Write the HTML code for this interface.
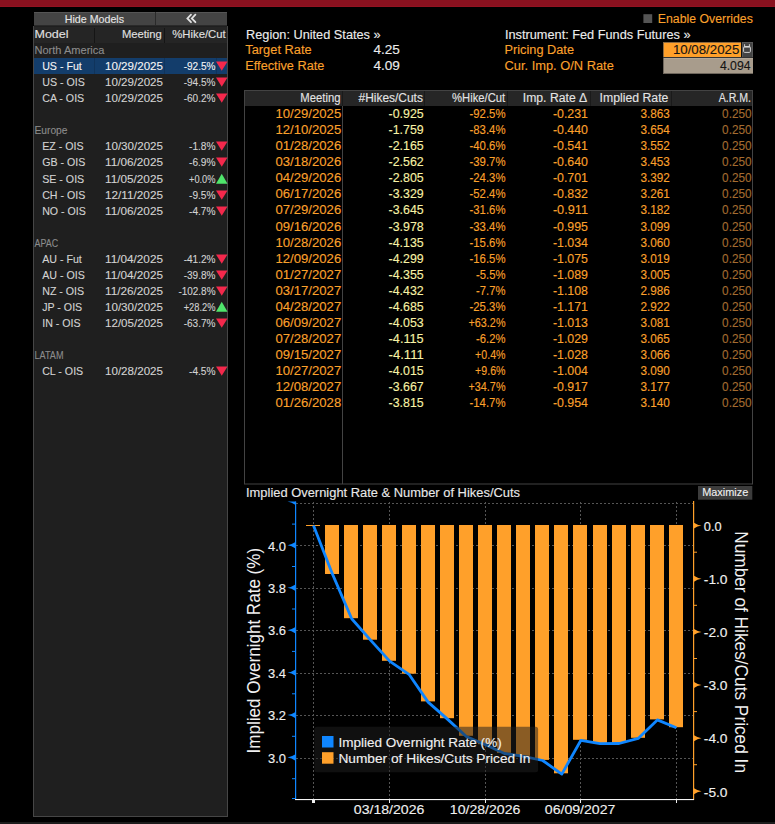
<!DOCTYPE html>
<html><head><meta charset="utf-8"><title>WIRP</title>
<style>html,body{margin:0;padding:0;background:#000;width:775px;height:824px;overflow:hidden}
svg{display:block;font-family:"Liberation Sans", sans-serif}</style></head>
<body><svg width="775" height="824" viewBox="0 0 775 824">
<rect x="0" y="0" width="775" height="824" fill="#000"/>
<rect x="0" y="0" width="775" height="7" fill="#89111f"/>
<rect x="0" y="6" width="775" height="1" fill="#931221"/>
<rect x="0" y="822" width="775" height="2" fill="#1c1c1c"/>
<rect x="33" y="26" width="195" height="791" fill="#464646"/>
<rect x="34" y="26" width="193" height="790" fill="#1f1f1f"/>
<rect x="34" y="12" width="193" height="14" fill="#2a2a2a"/>
<rect x="34" y="12" width="121" height="13" fill="#444444"/>
<rect x="34" y="12" width="121" height="1" fill="#555555"/>
<rect x="156" y="12" width="71" height="13" fill="#444444"/>
<rect x="156" y="12" width="71" height="1" fill="#555555"/>
<text x="64.8" y="22.5" font-size="11.5" fill="#e6e6e6" stroke="#e6e6e6" stroke-width="0.12" textLength="59.2" lengthAdjust="spacingAndGlyphs">Hide Models</text>
<path d="M191,14.6 L187.4,18.4 L191,22.2 M195.4,14.6 L191.8,18.4 L195.4,22.2" stroke="#e2e2e2" stroke-width="1.8" fill="none" stroke-linecap="round"/>
<rect x="34" y="27" width="193" height="16" fill="#252525"/>
<rect x="94" y="28" width="1" height="15" fill="#151515"/>
<rect x="164" y="28" width="1" height="15" fill="#151515"/>
<text x="34.5" y="38" font-size="11.5" fill="#e0e0e0" stroke="#e0e0e0" stroke-width="0.12" textLength="34" lengthAdjust="spacingAndGlyphs">Model</text>
<text x="161.8" y="38" font-size="11.5" fill="#e0e0e0" stroke="#e0e0e0" stroke-width="0.12" text-anchor="end" textLength="39.9" lengthAdjust="spacingAndGlyphs">Meeting</text>
<text x="225.7" y="38" font-size="11.5" fill="#e0e0e0" stroke="#e0e0e0" stroke-width="0.12" text-anchor="end" textLength="53.4" lengthAdjust="spacingAndGlyphs">%Hike/Cut</text>
<text x="34.5" y="54" font-size="11.5" fill="#8c8c8c" stroke="#8c8c8c" stroke-width="0.12" textLength="70.0" lengthAdjust="spacingAndGlyphs">North America</text>
<rect x="34" y="58" width="193" height="16" fill="#133d6b"/>
<rect x="94" y="58" width="1" height="16" fill="#10345c"/>
<rect x="164" y="58" width="1" height="16" fill="#10345c"/>
<rect x="216" y="58" width="1" height="16" fill="#10345c"/>
<text x="42.2" y="70" font-size="11.5" fill="#f4f4f4" stroke="#f4f4f4" stroke-width="0.12" textLength="39.6" lengthAdjust="spacingAndGlyphs">US - Fut</text>
<text x="163" y="70" font-size="11.5" fill="#f4f4f4" stroke="#f4f4f4" stroke-width="0.12" text-anchor="end" textLength="58" lengthAdjust="spacingAndGlyphs">10/29/2025</text>
<text x="215.5" y="70" font-size="11.5" fill="#f4f4f4" stroke="#f4f4f4" stroke-width="0.12" text-anchor="end" textLength="31.8" lengthAdjust="spacingAndGlyphs">-92.5%</text>
<path d="M216,61.4 L227.5,61.4 L221.75,70.8 Z" fill="#f4284c"/>
<text x="42.2" y="86" font-size="11.5" fill="#d2d2d2" stroke="#d2d2d2" stroke-width="0.12" textLength="42.6" lengthAdjust="spacingAndGlyphs">US - OIS</text>
<text x="163" y="86" font-size="11.5" fill="#d2d2d2" stroke="#d2d2d2" stroke-width="0.12" text-anchor="end" textLength="58" lengthAdjust="spacingAndGlyphs">10/29/2025</text>
<text x="215.5" y="86" font-size="11.5" fill="#d2d2d2" stroke="#d2d2d2" stroke-width="0.12" text-anchor="end" textLength="31.8" lengthAdjust="spacingAndGlyphs">-94.5%</text>
<path d="M216,77.4 L227.5,77.4 L221.75,86.8 Z" fill="#f4284c"/>
<text x="42.2" y="102" font-size="11.5" fill="#d2d2d2" stroke="#d2d2d2" stroke-width="0.12" textLength="42.0" lengthAdjust="spacingAndGlyphs">CA - OIS</text>
<text x="163" y="102" font-size="11.5" fill="#d2d2d2" stroke="#d2d2d2" stroke-width="0.12" text-anchor="end" textLength="58" lengthAdjust="spacingAndGlyphs">10/29/2025</text>
<text x="215.5" y="102" font-size="11.5" fill="#d2d2d2" stroke="#d2d2d2" stroke-width="0.12" text-anchor="end" textLength="31.8" lengthAdjust="spacingAndGlyphs">-60.2%</text>
<path d="M216,93.4 L227.5,93.4 L221.75,102.8 Z" fill="#f4284c"/>
<text x="34.5" y="134" font-size="11.5" fill="#8c8c8c" stroke="#8c8c8c" stroke-width="0.12" textLength="33.0" lengthAdjust="spacingAndGlyphs">Europe</text>
<text x="42.2" y="150" font-size="11.5" fill="#d2d2d2" stroke="#d2d2d2" stroke-width="0.12" textLength="41.4" lengthAdjust="spacingAndGlyphs">EZ - OIS</text>
<text x="163" y="150" font-size="11.5" fill="#d2d2d2" stroke="#d2d2d2" stroke-width="0.12" text-anchor="end" textLength="58" lengthAdjust="spacingAndGlyphs">10/30/2025</text>
<text x="215.5" y="150" font-size="11.5" fill="#d2d2d2" stroke="#d2d2d2" stroke-width="0.12" text-anchor="end" textLength="26.5" lengthAdjust="spacingAndGlyphs">-1.8%</text>
<path d="M216,141.4 L227.5,141.4 L221.75,150.8 Z" fill="#f4284c"/>
<text x="42.2" y="166" font-size="11.5" fill="#d2d2d2" stroke="#d2d2d2" stroke-width="0.12" textLength="43.1" lengthAdjust="spacingAndGlyphs">GB - OIS</text>
<text x="163" y="166" font-size="11.5" fill="#d2d2d2" stroke="#d2d2d2" stroke-width="0.12" text-anchor="end" textLength="58" lengthAdjust="spacingAndGlyphs">11/06/2025</text>
<text x="215.5" y="166" font-size="11.5" fill="#d2d2d2" stroke="#d2d2d2" stroke-width="0.12" text-anchor="end" textLength="26.5" lengthAdjust="spacingAndGlyphs">-6.9%</text>
<path d="M216,157.4 L227.5,157.4 L221.75,166.8 Z" fill="#f4284c"/>
<text x="42.2" y="183" font-size="11.5" fill="#d2d2d2" stroke="#d2d2d2" stroke-width="0.12" textLength="42.0" lengthAdjust="spacingAndGlyphs">SE - OIS</text>
<text x="163" y="183" font-size="11.5" fill="#d2d2d2" stroke="#d2d2d2" stroke-width="0.12" text-anchor="end" textLength="58" lengthAdjust="spacingAndGlyphs">11/05/2025</text>
<text x="215.5" y="183" font-size="11.5" fill="#d2d2d2" stroke="#d2d2d2" stroke-width="0.12" text-anchor="end" textLength="26.5" lengthAdjust="spacingAndGlyphs">+0.0%</text>
<path d="M216,183.8 L227.5,183.8 L221.75,173.8 Z" fill="#4fe56b"/>
<text x="42.2" y="199" font-size="11.5" fill="#d2d2d2" stroke="#d2d2d2" stroke-width="0.12" textLength="43.1" lengthAdjust="spacingAndGlyphs">CH - OIS</text>
<text x="163" y="199" font-size="11.5" fill="#d2d2d2" stroke="#d2d2d2" stroke-width="0.12" text-anchor="end" textLength="58" lengthAdjust="spacingAndGlyphs">12/11/2025</text>
<text x="215.5" y="199" font-size="11.5" fill="#d2d2d2" stroke="#d2d2d2" stroke-width="0.12" text-anchor="end" textLength="26.5" lengthAdjust="spacingAndGlyphs">-9.5%</text>
<path d="M216,190.4 L227.5,190.4 L221.75,199.8 Z" fill="#f4284c"/>
<text x="42.2" y="215" font-size="11.5" fill="#d2d2d2" stroke="#d2d2d2" stroke-width="0.12" textLength="43.7" lengthAdjust="spacingAndGlyphs">NO - OIS</text>
<text x="163" y="215" font-size="11.5" fill="#d2d2d2" stroke="#d2d2d2" stroke-width="0.12" text-anchor="end" textLength="58" lengthAdjust="spacingAndGlyphs">11/06/2025</text>
<text x="215.5" y="215" font-size="11.5" fill="#d2d2d2" stroke="#d2d2d2" stroke-width="0.12" text-anchor="end" textLength="26.5" lengthAdjust="spacingAndGlyphs">-4.7%</text>
<path d="M216,206.4 L227.5,206.4 L221.75,215.8 Z" fill="#f4284c"/>
<text x="34.5" y="247" font-size="11.5" fill="#8c8c8c" stroke="#8c8c8c" stroke-width="0.12" textLength="23.6" lengthAdjust="spacingAndGlyphs">APAC</text>
<text x="42.2" y="263" font-size="11.5" fill="#d2d2d2" stroke="#d2d2d2" stroke-width="0.12" textLength="39.6" lengthAdjust="spacingAndGlyphs">AU - Fut</text>
<text x="163" y="263" font-size="11.5" fill="#d2d2d2" stroke="#d2d2d2" stroke-width="0.12" text-anchor="end" textLength="58" lengthAdjust="spacingAndGlyphs">11/04/2025</text>
<text x="215.5" y="263" font-size="11.5" fill="#d2d2d2" stroke="#d2d2d2" stroke-width="0.12" text-anchor="end" textLength="31.8" lengthAdjust="spacingAndGlyphs">-41.2%</text>
<path d="M216,254.4 L227.5,254.4 L221.75,263.8 Z" fill="#f4284c"/>
<text x="42.2" y="279" font-size="11.5" fill="#d2d2d2" stroke="#d2d2d2" stroke-width="0.12" textLength="42.6" lengthAdjust="spacingAndGlyphs">AU - OIS</text>
<text x="163" y="279" font-size="11.5" fill="#d2d2d2" stroke="#d2d2d2" stroke-width="0.12" text-anchor="end" textLength="58" lengthAdjust="spacingAndGlyphs">11/04/2025</text>
<text x="215.5" y="279" font-size="11.5" fill="#d2d2d2" stroke="#d2d2d2" stroke-width="0.12" text-anchor="end" textLength="31.8" lengthAdjust="spacingAndGlyphs">-39.8%</text>
<path d="M216,270.4 L227.5,270.4 L221.75,279.8 Z" fill="#f4284c"/>
<text x="42.2" y="295" font-size="11.5" fill="#d2d2d2" stroke="#d2d2d2" stroke-width="0.12" textLength="42.0" lengthAdjust="spacingAndGlyphs">NZ - OIS</text>
<text x="163" y="295" font-size="11.5" fill="#d2d2d2" stroke="#d2d2d2" stroke-width="0.12" text-anchor="end" textLength="58" lengthAdjust="spacingAndGlyphs">11/26/2025</text>
<text x="215.5" y="295" font-size="11.5" fill="#d2d2d2" stroke="#d2d2d2" stroke-width="0.12" text-anchor="end" textLength="37.1" lengthAdjust="spacingAndGlyphs">-102.8%</text>
<path d="M216,286.4 L227.5,286.4 L221.75,295.8 Z" fill="#f4284c"/>
<text x="42.2" y="311" font-size="11.5" fill="#d2d2d2" stroke="#d2d2d2" stroke-width="0.12" textLength="40.0" lengthAdjust="spacingAndGlyphs">JP - OIS</text>
<text x="163" y="311" font-size="11.5" fill="#d2d2d2" stroke="#d2d2d2" stroke-width="0.12" text-anchor="end" textLength="58" lengthAdjust="spacingAndGlyphs">10/30/2025</text>
<text x="215.5" y="311" font-size="11.5" fill="#d2d2d2" stroke="#d2d2d2" stroke-width="0.12" text-anchor="end" textLength="31.8" lengthAdjust="spacingAndGlyphs">+28.2%</text>
<path d="M216,311.8 L227.5,311.8 L221.75,301.8 Z" fill="#4fe56b"/>
<text x="42.2" y="327" font-size="11.5" fill="#d2d2d2" stroke="#d2d2d2" stroke-width="0.12" textLength="38.4" lengthAdjust="spacingAndGlyphs">IN - OIS</text>
<text x="163" y="327" font-size="11.5" fill="#d2d2d2" stroke="#d2d2d2" stroke-width="0.12" text-anchor="end" textLength="58" lengthAdjust="spacingAndGlyphs">12/05/2025</text>
<text x="215.5" y="327" font-size="11.5" fill="#d2d2d2" stroke="#d2d2d2" stroke-width="0.12" text-anchor="end" textLength="31.8" lengthAdjust="spacingAndGlyphs">-63.7%</text>
<path d="M216,318.4 L227.5,318.4 L221.75,327.8 Z" fill="#f4284c"/>
<text x="34.5" y="359" font-size="11.5" fill="#8c8c8c" stroke="#8c8c8c" stroke-width="0.12" textLength="29.0" lengthAdjust="spacingAndGlyphs">LATAM</text>
<text x="42.2" y="375" font-size="11.5" fill="#d2d2d2" stroke="#d2d2d2" stroke-width="0.12" textLength="41.0" lengthAdjust="spacingAndGlyphs">CL - OIS</text>
<text x="163" y="375" font-size="11.5" fill="#d2d2d2" stroke="#d2d2d2" stroke-width="0.12" text-anchor="end" textLength="58" lengthAdjust="spacingAndGlyphs">10/28/2025</text>
<text x="215.5" y="375" font-size="11.5" fill="#d2d2d2" stroke="#d2d2d2" stroke-width="0.12" text-anchor="end" textLength="26.5" lengthAdjust="spacingAndGlyphs">-4.5%</text>
<path d="M216,366.4 L227.5,366.4 L221.75,375.8 Z" fill="#f4284c"/>
<text x="246" y="39" font-size="12.5" fill="#ececec" stroke="#ececec" stroke-width="0.12" textLength="134.6" lengthAdjust="spacingAndGlyphs">Region: United States »</text>
<text x="245.3" y="54" font-size="12.5" fill="#fba12c" stroke="#fba12c" stroke-width="0.12" textLength="66.3" lengthAdjust="spacingAndGlyphs">Target Rate</text>
<text x="245.3" y="69.9" font-size="12.5" fill="#fba12c" stroke="#fba12c" stroke-width="0.12" textLength="79.1" lengthAdjust="spacingAndGlyphs">Effective Rate</text>
<text x="399.9" y="54" font-size="12.5" fill="#ececec" stroke="#ececec" stroke-width="0.12" text-anchor="end" textLength="26.5" lengthAdjust="spacingAndGlyphs">4.25</text>
<text x="399.9" y="69.9" font-size="12.5" fill="#ececec" stroke="#ececec" stroke-width="0.12" text-anchor="end" textLength="26.5" lengthAdjust="spacingAndGlyphs">4.09</text>
<rect x="643.4" y="14.2" width="8.8" height="8.8" fill="#555555"/>
<text x="657.8" y="22.8" font-size="12.5" fill="#fba12c" stroke="#fba12c" stroke-width="0.12" textLength="95" lengthAdjust="spacingAndGlyphs">Enable Overrides</text>
<text x="505" y="39" font-size="12.5" fill="#ececec" stroke="#ececec" stroke-width="0.12" textLength="185.5" lengthAdjust="spacingAndGlyphs">Instrument: Fed Funds Futures »</text>
<text x="504.5" y="54" font-size="12.5" fill="#fba12c" stroke="#fba12c" stroke-width="0.12" textLength="69.5" lengthAdjust="spacingAndGlyphs">Pricing Date</text>
<text x="504.5" y="69.9" font-size="12.5" fill="#fba12c" stroke="#fba12c" stroke-width="0.12" textLength="109.3" lengthAdjust="spacingAndGlyphs">Cur. Imp. O/N Rate</text>
<rect x="663" y="42" width="78" height="15" fill="#8c6a40"/>
<rect x="664" y="43" width="77" height="14" fill="#ffa02a"/>
<rect x="741" y="42" width="1" height="15" fill="#111111"/>
<rect x="742" y="42" width="11" height="16" fill="#575757"/>
<rect x="743" y="43" width="9" height="14" fill="#444444"/>
<text x="739.3" y="54" font-size="12.5" fill="#141414" stroke="#141414" stroke-width="0.12" text-anchor="end" textLength="66.4" lengthAdjust="spacingAndGlyphs">10/08/2025</text>
<rect x="743.6" y="46.6" width="6.8" height="5.8" rx="1" fill="none" stroke="#d0d0d0" stroke-width="1"/>
<rect x="744" y="46.3" width="6" height="1.2" fill="#e0e0e0"/>
<path d="M744.6,44.2 L744.6,46.5 M749.4,44.2 L749.4,46.5" stroke="#cfcfcf" stroke-width="1"/>
<rect x="663" y="57" width="90" height="17" fill="#333333"/>
<rect x="663" y="58" width="90" height="16" fill="#6e665c"/>
<rect x="664" y="58" width="89" height="15" fill="#a89c8c"/>
<rect x="664" y="58" width="89" height="1" fill="#b4a898"/>
<text x="750.5" y="69.6" font-size="12.5" fill="#141414" stroke="#141414" stroke-width="0.12" text-anchor="end" textLength="30.6" lengthAdjust="spacingAndGlyphs">4.094</text>
<rect x="244.5" y="90.5" width="508" height="393.5" fill="#000" stroke="#434343" stroke-width="1"/>
<rect x="245" y="91" width="507" height="15" fill="#262626"/>
<rect x="342" y="91" width="1" height="15" fill="#1a1a1a"/>
<rect x="424" y="91" width="1" height="15" fill="#1a1a1a"/>
<rect x="507" y="91" width="1" height="15" fill="#1a1a1a"/>
<rect x="590" y="91" width="1" height="15" fill="#1a1a1a"/>
<rect x="671" y="91" width="1" height="15" fill="#1a1a1a"/>
<rect x="342" y="106" width="1" height="378" fill="#434343"/>
<text x="340.5" y="101.8" font-size="12" fill="#e4e4e4" stroke="#e4e4e4" stroke-width="0.12" text-anchor="end" textLength="40.2" lengthAdjust="spacingAndGlyphs">Meeting</text>
<text x="422.9" y="101.8" font-size="12" fill="#e4e4e4" stroke="#e4e4e4" stroke-width="0.12" text-anchor="end" textLength="64.4" lengthAdjust="spacingAndGlyphs">#Hikes/Cuts</text>
<text x="505.2" y="101.8" font-size="12" fill="#e4e4e4" stroke="#e4e4e4" stroke-width="0.12" text-anchor="end" textLength="53.2" lengthAdjust="spacingAndGlyphs">%Hike/Cut</text>
<text x="587.2" y="101.8" font-size="12" fill="#e4e4e4" stroke="#e4e4e4" stroke-width="0.12" text-anchor="end" textLength="64.4" lengthAdjust="spacingAndGlyphs">Imp. Rate Δ</text>
<text x="668.4" y="101.8" font-size="12" fill="#e4e4e4" stroke="#e4e4e4" stroke-width="0.12" text-anchor="end" textLength="68.8" lengthAdjust="spacingAndGlyphs">Implied Rate</text>
<text x="751" y="101.8" font-size="12" fill="#e4e4e4" stroke="#e4e4e4" stroke-width="0.12" text-anchor="end" textLength="32.3" lengthAdjust="spacingAndGlyphs">A.R.M.</text>
<text x="341.2" y="118" font-size="13" fill="#fba12c" stroke="#fba12c" stroke-width="0.12" text-anchor="end" textLength="65.7" lengthAdjust="spacingAndGlyphs">10/29/2025</text>
<text x="423.7" y="118" font-size="13" fill="#f8f2a6" stroke="#f8f2a6" stroke-width="0.12" text-anchor="end" textLength="35.1" lengthAdjust="spacingAndGlyphs">-0.925</text>
<text x="505.5" y="118" font-size="13" fill="#fba12c" stroke="#fba12c" stroke-width="0.12" text-anchor="end" textLength="36.0" lengthAdjust="spacingAndGlyphs">-92.5%</text>
<text x="588" y="118" font-size="13" fill="#fba12c" stroke="#fba12c" stroke-width="0.12" text-anchor="end" textLength="35.1" lengthAdjust="spacingAndGlyphs">-0.231</text>
<text x="669.9" y="118" font-size="13" fill="#fba12c" stroke="#fba12c" stroke-width="0.12" text-anchor="end" textLength="29.5" lengthAdjust="spacingAndGlyphs">3.863</text>
<text x="751.6" y="118" font-size="13" fill="#a46c30" stroke="#a46c30" stroke-width="0.12" text-anchor="end" textLength="29.5" lengthAdjust="spacingAndGlyphs">0.250</text>
<text x="341.2" y="134" font-size="13" fill="#fba12c" stroke="#fba12c" stroke-width="0.12" text-anchor="end" textLength="65.7" lengthAdjust="spacingAndGlyphs">12/10/2025</text>
<text x="423.7" y="134" font-size="13" fill="#f8f2a6" stroke="#f8f2a6" stroke-width="0.12" text-anchor="end" textLength="35.1" lengthAdjust="spacingAndGlyphs">-1.759</text>
<text x="505.5" y="134" font-size="13" fill="#fba12c" stroke="#fba12c" stroke-width="0.12" text-anchor="end" textLength="36.0" lengthAdjust="spacingAndGlyphs">-83.4%</text>
<text x="588" y="134" font-size="13" fill="#fba12c" stroke="#fba12c" stroke-width="0.12" text-anchor="end" textLength="35.1" lengthAdjust="spacingAndGlyphs">-0.440</text>
<text x="669.9" y="134" font-size="13" fill="#fba12c" stroke="#fba12c" stroke-width="0.12" text-anchor="end" textLength="29.5" lengthAdjust="spacingAndGlyphs">3.654</text>
<text x="751.6" y="134" font-size="13" fill="#a46c30" stroke="#a46c30" stroke-width="0.12" text-anchor="end" textLength="29.5" lengthAdjust="spacingAndGlyphs">0.250</text>
<text x="341.2" y="150" font-size="13" fill="#fba12c" stroke="#fba12c" stroke-width="0.12" text-anchor="end" textLength="65.7" lengthAdjust="spacingAndGlyphs">01/28/2026</text>
<text x="423.7" y="150" font-size="13" fill="#f8f2a6" stroke="#f8f2a6" stroke-width="0.12" text-anchor="end" textLength="35.1" lengthAdjust="spacingAndGlyphs">-2.165</text>
<text x="505.5" y="150" font-size="13" fill="#fba12c" stroke="#fba12c" stroke-width="0.12" text-anchor="end" textLength="36.0" lengthAdjust="spacingAndGlyphs">-40.6%</text>
<text x="588" y="150" font-size="13" fill="#fba12c" stroke="#fba12c" stroke-width="0.12" text-anchor="end" textLength="35.1" lengthAdjust="spacingAndGlyphs">-0.541</text>
<text x="669.9" y="150" font-size="13" fill="#fba12c" stroke="#fba12c" stroke-width="0.12" text-anchor="end" textLength="29.5" lengthAdjust="spacingAndGlyphs">3.552</text>
<text x="751.6" y="150" font-size="13" fill="#a46c30" stroke="#a46c30" stroke-width="0.12" text-anchor="end" textLength="29.5" lengthAdjust="spacingAndGlyphs">0.250</text>
<text x="341.2" y="166" font-size="13" fill="#fba12c" stroke="#fba12c" stroke-width="0.12" text-anchor="end" textLength="65.7" lengthAdjust="spacingAndGlyphs">03/18/2026</text>
<text x="423.7" y="166" font-size="13" fill="#f8f2a6" stroke="#f8f2a6" stroke-width="0.12" text-anchor="end" textLength="35.1" lengthAdjust="spacingAndGlyphs">-2.562</text>
<text x="505.5" y="166" font-size="13" fill="#fba12c" stroke="#fba12c" stroke-width="0.12" text-anchor="end" textLength="36.0" lengthAdjust="spacingAndGlyphs">-39.7%</text>
<text x="588" y="166" font-size="13" fill="#fba12c" stroke="#fba12c" stroke-width="0.12" text-anchor="end" textLength="35.1" lengthAdjust="spacingAndGlyphs">-0.640</text>
<text x="669.9" y="166" font-size="13" fill="#fba12c" stroke="#fba12c" stroke-width="0.12" text-anchor="end" textLength="29.5" lengthAdjust="spacingAndGlyphs">3.453</text>
<text x="751.6" y="166" font-size="13" fill="#a46c30" stroke="#a46c30" stroke-width="0.12" text-anchor="end" textLength="29.5" lengthAdjust="spacingAndGlyphs">0.250</text>
<text x="341.2" y="182" font-size="13" fill="#fba12c" stroke="#fba12c" stroke-width="0.12" text-anchor="end" textLength="65.7" lengthAdjust="spacingAndGlyphs">04/29/2026</text>
<text x="423.7" y="182" font-size="13" fill="#f8f2a6" stroke="#f8f2a6" stroke-width="0.12" text-anchor="end" textLength="35.1" lengthAdjust="spacingAndGlyphs">-2.805</text>
<text x="505.5" y="182" font-size="13" fill="#fba12c" stroke="#fba12c" stroke-width="0.12" text-anchor="end" textLength="36.0" lengthAdjust="spacingAndGlyphs">-24.3%</text>
<text x="588" y="182" font-size="13" fill="#fba12c" stroke="#fba12c" stroke-width="0.12" text-anchor="end" textLength="35.1" lengthAdjust="spacingAndGlyphs">-0.701</text>
<text x="669.9" y="182" font-size="13" fill="#fba12c" stroke="#fba12c" stroke-width="0.12" text-anchor="end" textLength="29.5" lengthAdjust="spacingAndGlyphs">3.392</text>
<text x="751.6" y="182" font-size="13" fill="#a46c30" stroke="#a46c30" stroke-width="0.12" text-anchor="end" textLength="29.5" lengthAdjust="spacingAndGlyphs">0.250</text>
<text x="341.2" y="198" font-size="13" fill="#fba12c" stroke="#fba12c" stroke-width="0.12" text-anchor="end" textLength="65.7" lengthAdjust="spacingAndGlyphs">06/17/2026</text>
<text x="423.7" y="198" font-size="13" fill="#f8f2a6" stroke="#f8f2a6" stroke-width="0.12" text-anchor="end" textLength="35.1" lengthAdjust="spacingAndGlyphs">-3.329</text>
<text x="505.5" y="198" font-size="13" fill="#fba12c" stroke="#fba12c" stroke-width="0.12" text-anchor="end" textLength="36.0" lengthAdjust="spacingAndGlyphs">-52.4%</text>
<text x="588" y="198" font-size="13" fill="#fba12c" stroke="#fba12c" stroke-width="0.12" text-anchor="end" textLength="35.1" lengthAdjust="spacingAndGlyphs">-0.832</text>
<text x="669.9" y="198" font-size="13" fill="#fba12c" stroke="#fba12c" stroke-width="0.12" text-anchor="end" textLength="29.5" lengthAdjust="spacingAndGlyphs">3.261</text>
<text x="751.6" y="198" font-size="13" fill="#a46c30" stroke="#a46c30" stroke-width="0.12" text-anchor="end" textLength="29.5" lengthAdjust="spacingAndGlyphs">0.250</text>
<text x="341.2" y="214" font-size="13" fill="#fba12c" stroke="#fba12c" stroke-width="0.12" text-anchor="end" textLength="65.7" lengthAdjust="spacingAndGlyphs">07/29/2026</text>
<text x="423.7" y="214" font-size="13" fill="#f8f2a6" stroke="#f8f2a6" stroke-width="0.12" text-anchor="end" textLength="35.1" lengthAdjust="spacingAndGlyphs">-3.645</text>
<text x="505.5" y="214" font-size="13" fill="#fba12c" stroke="#fba12c" stroke-width="0.12" text-anchor="end" textLength="36.0" lengthAdjust="spacingAndGlyphs">-31.6%</text>
<text x="588" y="214" font-size="13" fill="#fba12c" stroke="#fba12c" stroke-width="0.12" text-anchor="end" textLength="35.1" lengthAdjust="spacingAndGlyphs">-0.911</text>
<text x="669.9" y="214" font-size="13" fill="#fba12c" stroke="#fba12c" stroke-width="0.12" text-anchor="end" textLength="29.5" lengthAdjust="spacingAndGlyphs">3.182</text>
<text x="751.6" y="214" font-size="13" fill="#a46c30" stroke="#a46c30" stroke-width="0.12" text-anchor="end" textLength="29.5" lengthAdjust="spacingAndGlyphs">0.250</text>
<text x="341.2" y="231" font-size="13" fill="#fba12c" stroke="#fba12c" stroke-width="0.12" text-anchor="end" textLength="65.7" lengthAdjust="spacingAndGlyphs">09/16/2026</text>
<text x="423.7" y="231" font-size="13" fill="#f8f2a6" stroke="#f8f2a6" stroke-width="0.12" text-anchor="end" textLength="35.1" lengthAdjust="spacingAndGlyphs">-3.978</text>
<text x="505.5" y="231" font-size="13" fill="#fba12c" stroke="#fba12c" stroke-width="0.12" text-anchor="end" textLength="36.0" lengthAdjust="spacingAndGlyphs">-33.4%</text>
<text x="588" y="231" font-size="13" fill="#fba12c" stroke="#fba12c" stroke-width="0.12" text-anchor="end" textLength="35.1" lengthAdjust="spacingAndGlyphs">-0.995</text>
<text x="669.9" y="231" font-size="13" fill="#fba12c" stroke="#fba12c" stroke-width="0.12" text-anchor="end" textLength="29.5" lengthAdjust="spacingAndGlyphs">3.099</text>
<text x="751.6" y="231" font-size="13" fill="#a46c30" stroke="#a46c30" stroke-width="0.12" text-anchor="end" textLength="29.5" lengthAdjust="spacingAndGlyphs">0.250</text>
<text x="341.2" y="247" font-size="13" fill="#fba12c" stroke="#fba12c" stroke-width="0.12" text-anchor="end" textLength="65.7" lengthAdjust="spacingAndGlyphs">10/28/2026</text>
<text x="423.7" y="247" font-size="13" fill="#f8f2a6" stroke="#f8f2a6" stroke-width="0.12" text-anchor="end" textLength="35.1" lengthAdjust="spacingAndGlyphs">-4.135</text>
<text x="505.5" y="247" font-size="13" fill="#fba12c" stroke="#fba12c" stroke-width="0.12" text-anchor="end" textLength="36.0" lengthAdjust="spacingAndGlyphs">-15.6%</text>
<text x="588" y="247" font-size="13" fill="#fba12c" stroke="#fba12c" stroke-width="0.12" text-anchor="end" textLength="35.1" lengthAdjust="spacingAndGlyphs">-1.034</text>
<text x="669.9" y="247" font-size="13" fill="#fba12c" stroke="#fba12c" stroke-width="0.12" text-anchor="end" textLength="29.5" lengthAdjust="spacingAndGlyphs">3.060</text>
<text x="751.6" y="247" font-size="13" fill="#a46c30" stroke="#a46c30" stroke-width="0.12" text-anchor="end" textLength="29.5" lengthAdjust="spacingAndGlyphs">0.250</text>
<text x="341.2" y="263" font-size="13" fill="#fba12c" stroke="#fba12c" stroke-width="0.12" text-anchor="end" textLength="65.7" lengthAdjust="spacingAndGlyphs">12/09/2026</text>
<text x="423.7" y="263" font-size="13" fill="#f8f2a6" stroke="#f8f2a6" stroke-width="0.12" text-anchor="end" textLength="35.1" lengthAdjust="spacingAndGlyphs">-4.299</text>
<text x="505.5" y="263" font-size="13" fill="#fba12c" stroke="#fba12c" stroke-width="0.12" text-anchor="end" textLength="36.0" lengthAdjust="spacingAndGlyphs">-16.5%</text>
<text x="588" y="263" font-size="13" fill="#fba12c" stroke="#fba12c" stroke-width="0.12" text-anchor="end" textLength="35.1" lengthAdjust="spacingAndGlyphs">-1.075</text>
<text x="669.9" y="263" font-size="13" fill="#fba12c" stroke="#fba12c" stroke-width="0.12" text-anchor="end" textLength="29.5" lengthAdjust="spacingAndGlyphs">3.019</text>
<text x="751.6" y="263" font-size="13" fill="#a46c30" stroke="#a46c30" stroke-width="0.12" text-anchor="end" textLength="29.5" lengthAdjust="spacingAndGlyphs">0.250</text>
<text x="341.2" y="279" font-size="13" fill="#fba12c" stroke="#fba12c" stroke-width="0.12" text-anchor="end" textLength="65.7" lengthAdjust="spacingAndGlyphs">01/27/2027</text>
<text x="423.7" y="279" font-size="13" fill="#f8f2a6" stroke="#f8f2a6" stroke-width="0.12" text-anchor="end" textLength="35.1" lengthAdjust="spacingAndGlyphs">-4.355</text>
<text x="505.5" y="279" font-size="13" fill="#fba12c" stroke="#fba12c" stroke-width="0.12" text-anchor="end" textLength="29.4" lengthAdjust="spacingAndGlyphs">-5.5%</text>
<text x="588" y="279" font-size="13" fill="#fba12c" stroke="#fba12c" stroke-width="0.12" text-anchor="end" textLength="35.1" lengthAdjust="spacingAndGlyphs">-1.089</text>
<text x="669.9" y="279" font-size="13" fill="#fba12c" stroke="#fba12c" stroke-width="0.12" text-anchor="end" textLength="29.5" lengthAdjust="spacingAndGlyphs">3.005</text>
<text x="751.6" y="279" font-size="13" fill="#a46c30" stroke="#a46c30" stroke-width="0.12" text-anchor="end" textLength="29.5" lengthAdjust="spacingAndGlyphs">0.250</text>
<text x="341.2" y="295" font-size="13" fill="#fba12c" stroke="#fba12c" stroke-width="0.12" text-anchor="end" textLength="65.7" lengthAdjust="spacingAndGlyphs">03/17/2027</text>
<text x="423.7" y="295" font-size="13" fill="#f8f2a6" stroke="#f8f2a6" stroke-width="0.12" text-anchor="end" textLength="35.1" lengthAdjust="spacingAndGlyphs">-4.432</text>
<text x="505.5" y="295" font-size="13" fill="#fba12c" stroke="#fba12c" stroke-width="0.12" text-anchor="end" textLength="29.4" lengthAdjust="spacingAndGlyphs">-7.7%</text>
<text x="588" y="295" font-size="13" fill="#fba12c" stroke="#fba12c" stroke-width="0.12" text-anchor="end" textLength="35.1" lengthAdjust="spacingAndGlyphs">-1.108</text>
<text x="669.9" y="295" font-size="13" fill="#fba12c" stroke="#fba12c" stroke-width="0.12" text-anchor="end" textLength="29.5" lengthAdjust="spacingAndGlyphs">2.986</text>
<text x="751.6" y="295" font-size="13" fill="#a46c30" stroke="#a46c30" stroke-width="0.12" text-anchor="end" textLength="29.5" lengthAdjust="spacingAndGlyphs">0.250</text>
<text x="341.2" y="311" font-size="13" fill="#fba12c" stroke="#fba12c" stroke-width="0.12" text-anchor="end" textLength="65.7" lengthAdjust="spacingAndGlyphs">04/28/2027</text>
<text x="423.7" y="311" font-size="13" fill="#f8f2a6" stroke="#f8f2a6" stroke-width="0.12" text-anchor="end" textLength="35.1" lengthAdjust="spacingAndGlyphs">-4.685</text>
<text x="505.5" y="311" font-size="13" fill="#fba12c" stroke="#fba12c" stroke-width="0.12" text-anchor="end" textLength="36.0" lengthAdjust="spacingAndGlyphs">-25.3%</text>
<text x="588" y="311" font-size="13" fill="#fba12c" stroke="#fba12c" stroke-width="0.12" text-anchor="end" textLength="35.1" lengthAdjust="spacingAndGlyphs">-1.171</text>
<text x="669.9" y="311" font-size="13" fill="#fba12c" stroke="#fba12c" stroke-width="0.12" text-anchor="end" textLength="29.5" lengthAdjust="spacingAndGlyphs">2.922</text>
<text x="751.6" y="311" font-size="13" fill="#a46c30" stroke="#a46c30" stroke-width="0.12" text-anchor="end" textLength="29.5" lengthAdjust="spacingAndGlyphs">0.250</text>
<text x="341.2" y="327" font-size="13" fill="#fba12c" stroke="#fba12c" stroke-width="0.12" text-anchor="end" textLength="65.7" lengthAdjust="spacingAndGlyphs">06/09/2027</text>
<text x="423.7" y="327" font-size="13" fill="#f8f2a6" stroke="#f8f2a6" stroke-width="0.12" text-anchor="end" textLength="35.1" lengthAdjust="spacingAndGlyphs">-4.053</text>
<text x="505.5" y="327" font-size="13" fill="#fba12c" stroke="#fba12c" stroke-width="0.12" text-anchor="end" textLength="37.0" lengthAdjust="spacingAndGlyphs">+63.2%</text>
<text x="588" y="327" font-size="13" fill="#fba12c" stroke="#fba12c" stroke-width="0.12" text-anchor="end" textLength="35.1" lengthAdjust="spacingAndGlyphs">-1.013</text>
<text x="669.9" y="327" font-size="13" fill="#fba12c" stroke="#fba12c" stroke-width="0.12" text-anchor="end" textLength="29.5" lengthAdjust="spacingAndGlyphs">3.081</text>
<text x="751.6" y="327" font-size="13" fill="#a46c30" stroke="#a46c30" stroke-width="0.12" text-anchor="end" textLength="29.5" lengthAdjust="spacingAndGlyphs">0.250</text>
<text x="341.2" y="343" font-size="13" fill="#fba12c" stroke="#fba12c" stroke-width="0.12" text-anchor="end" textLength="65.7" lengthAdjust="spacingAndGlyphs">07/28/2027</text>
<text x="423.7" y="343" font-size="13" fill="#f8f2a6" stroke="#f8f2a6" stroke-width="0.12" text-anchor="end" textLength="35.1" lengthAdjust="spacingAndGlyphs">-4.115</text>
<text x="505.5" y="343" font-size="13" fill="#fba12c" stroke="#fba12c" stroke-width="0.12" text-anchor="end" textLength="29.4" lengthAdjust="spacingAndGlyphs">-6.2%</text>
<text x="588" y="343" font-size="13" fill="#fba12c" stroke="#fba12c" stroke-width="0.12" text-anchor="end" textLength="35.1" lengthAdjust="spacingAndGlyphs">-1.029</text>
<text x="669.9" y="343" font-size="13" fill="#fba12c" stroke="#fba12c" stroke-width="0.12" text-anchor="end" textLength="29.5" lengthAdjust="spacingAndGlyphs">3.065</text>
<text x="751.6" y="343" font-size="13" fill="#a46c30" stroke="#a46c30" stroke-width="0.12" text-anchor="end" textLength="29.5" lengthAdjust="spacingAndGlyphs">0.250</text>
<text x="341.2" y="359" font-size="13" fill="#fba12c" stroke="#fba12c" stroke-width="0.12" text-anchor="end" textLength="65.7" lengthAdjust="spacingAndGlyphs">09/15/2027</text>
<text x="423.7" y="359" font-size="13" fill="#f8f2a6" stroke="#f8f2a6" stroke-width="0.12" text-anchor="end" textLength="35.1" lengthAdjust="spacingAndGlyphs">-4.111</text>
<text x="505.5" y="359" font-size="13" fill="#fba12c" stroke="#fba12c" stroke-width="0.12" text-anchor="end" textLength="30.4" lengthAdjust="spacingAndGlyphs">+0.4%</text>
<text x="588" y="359" font-size="13" fill="#fba12c" stroke="#fba12c" stroke-width="0.12" text-anchor="end" textLength="35.1" lengthAdjust="spacingAndGlyphs">-1.028</text>
<text x="669.9" y="359" font-size="13" fill="#fba12c" stroke="#fba12c" stroke-width="0.12" text-anchor="end" textLength="29.5" lengthAdjust="spacingAndGlyphs">3.066</text>
<text x="751.6" y="359" font-size="13" fill="#a46c30" stroke="#a46c30" stroke-width="0.12" text-anchor="end" textLength="29.5" lengthAdjust="spacingAndGlyphs">0.250</text>
<text x="341.2" y="375" font-size="13" fill="#fba12c" stroke="#fba12c" stroke-width="0.12" text-anchor="end" textLength="65.7" lengthAdjust="spacingAndGlyphs">10/27/2027</text>
<text x="423.7" y="375" font-size="13" fill="#f8f2a6" stroke="#f8f2a6" stroke-width="0.12" text-anchor="end" textLength="35.1" lengthAdjust="spacingAndGlyphs">-4.015</text>
<text x="505.5" y="375" font-size="13" fill="#fba12c" stroke="#fba12c" stroke-width="0.12" text-anchor="end" textLength="30.4" lengthAdjust="spacingAndGlyphs">+9.6%</text>
<text x="588" y="375" font-size="13" fill="#fba12c" stroke="#fba12c" stroke-width="0.12" text-anchor="end" textLength="35.1" lengthAdjust="spacingAndGlyphs">-1.004</text>
<text x="669.9" y="375" font-size="13" fill="#fba12c" stroke="#fba12c" stroke-width="0.12" text-anchor="end" textLength="29.5" lengthAdjust="spacingAndGlyphs">3.090</text>
<text x="751.6" y="375" font-size="13" fill="#a46c30" stroke="#a46c30" stroke-width="0.12" text-anchor="end" textLength="29.5" lengthAdjust="spacingAndGlyphs">0.250</text>
<text x="341.2" y="391" font-size="13" fill="#fba12c" stroke="#fba12c" stroke-width="0.12" text-anchor="end" textLength="65.7" lengthAdjust="spacingAndGlyphs">12/08/2027</text>
<text x="423.7" y="391" font-size="13" fill="#f8f2a6" stroke="#f8f2a6" stroke-width="0.12" text-anchor="end" textLength="35.1" lengthAdjust="spacingAndGlyphs">-3.667</text>
<text x="505.5" y="391" font-size="13" fill="#fba12c" stroke="#fba12c" stroke-width="0.12" text-anchor="end" textLength="37.0" lengthAdjust="spacingAndGlyphs">+34.7%</text>
<text x="588" y="391" font-size="13" fill="#fba12c" stroke="#fba12c" stroke-width="0.12" text-anchor="end" textLength="35.1" lengthAdjust="spacingAndGlyphs">-0.917</text>
<text x="669.9" y="391" font-size="13" fill="#fba12c" stroke="#fba12c" stroke-width="0.12" text-anchor="end" textLength="29.5" lengthAdjust="spacingAndGlyphs">3.177</text>
<text x="751.6" y="391" font-size="13" fill="#a46c30" stroke="#a46c30" stroke-width="0.12" text-anchor="end" textLength="29.5" lengthAdjust="spacingAndGlyphs">0.250</text>
<text x="341.2" y="407" font-size="13" fill="#fba12c" stroke="#fba12c" stroke-width="0.12" text-anchor="end" textLength="65.7" lengthAdjust="spacingAndGlyphs">01/26/2028</text>
<text x="423.7" y="407" font-size="13" fill="#f8f2a6" stroke="#f8f2a6" stroke-width="0.12" text-anchor="end" textLength="35.1" lengthAdjust="spacingAndGlyphs">-3.815</text>
<text x="505.5" y="407" font-size="13" fill="#fba12c" stroke="#fba12c" stroke-width="0.12" text-anchor="end" textLength="36.0" lengthAdjust="spacingAndGlyphs">-14.7%</text>
<text x="588" y="407" font-size="13" fill="#fba12c" stroke="#fba12c" stroke-width="0.12" text-anchor="end" textLength="35.1" lengthAdjust="spacingAndGlyphs">-0.954</text>
<text x="669.9" y="407" font-size="13" fill="#fba12c" stroke="#fba12c" stroke-width="0.12" text-anchor="end" textLength="29.5" lengthAdjust="spacingAndGlyphs">3.140</text>
<text x="751.6" y="407" font-size="13" fill="#a46c30" stroke="#a46c30" stroke-width="0.12" text-anchor="end" textLength="29.5" lengthAdjust="spacingAndGlyphs">0.250</text>
<text x="246" y="497" font-size="12" fill="#e8e8e8" stroke="#e8e8e8" stroke-width="0.12" textLength="274" lengthAdjust="spacingAndGlyphs">Implied Overnight Rate &amp; Number of Hikes/Cuts</text>
<rect x="698" y="486" width="54.3" height="13.7" fill="#3c3c3c"/>
<text x="702.2" y="496.2" font-size="11.5" fill="#efefef" stroke="#efefef" stroke-width="0.12" textLength="46.1" lengthAdjust="spacingAndGlyphs">Maximize</text>
<path d="M296,503.5 L693,503.5 M296,545.5 L693,545.5 M296,588.5 L693,588.5 M296,630.5 L693,630.5 M296,673.5 L693,673.5 M296,715.5 L693,715.5 M296,758.5 L693,758.5 M313.5,502 L313.5,799 M389.5,502 L389.5,799 M485.5,502 L485.5,799 M580.5,502 L580.5,799 M676.5,502 L676.5,799" stroke="#555555" stroke-width="1" stroke-dasharray="2,2" fill="none"/>
<rect x="306" y="525" width="14" height="1" fill="#ffa02a"/>
<rect x="325" y="525" width="14" height="49.0" fill="#ffa02a"/>
<rect x="344" y="525" width="14" height="93.2" fill="#ffa02a"/>
<rect x="363" y="525" width="14" height="114.7" fill="#ffa02a"/>
<rect x="382" y="525" width="14" height="135.8" fill="#ffa02a"/>
<rect x="402" y="525" width="14" height="148.7" fill="#ffa02a"/>
<rect x="421" y="525" width="14" height="176.4" fill="#ffa02a"/>
<rect x="440" y="525" width="14" height="193.2" fill="#ffa02a"/>
<rect x="459" y="525" width="14" height="210.8" fill="#ffa02a"/>
<rect x="478" y="525" width="14" height="219.2" fill="#ffa02a"/>
<rect x="497" y="525" width="14" height="227.8" fill="#ffa02a"/>
<rect x="516" y="525" width="14" height="230.8" fill="#ffa02a"/>
<rect x="535" y="525" width="14" height="234.9" fill="#ffa02a"/>
<rect x="554" y="525" width="14" height="248.3" fill="#ffa02a"/>
<rect x="573" y="525" width="14" height="214.8" fill="#ffa02a"/>
<rect x="593" y="525" width="14" height="218.1" fill="#ffa02a"/>
<rect x="612" y="525" width="14" height="217.9" fill="#ffa02a"/>
<rect x="631" y="525" width="14" height="212.8" fill="#ffa02a"/>
<rect x="650" y="525" width="14" height="194.4" fill="#ffa02a"/>
<rect x="669" y="525" width="14" height="202.2" fill="#ffa02a"/>
<polyline points="313.5,525.4 332.6,574.4 351.7,618.7 370.8,640.4 389.9,661.4 409.0,674.3 428.1,702.1 447.2,718.9 466.3,736.5 485.4,744.8 504.5,753.5 523.6,756.4 542.7,760.5 561.8,774.1 580.9,740.3 600.0,743.7 619.1,743.5 638.2,738.4 657.3,719.9 676.4,727.8" fill="none" stroke="#0f86ff" stroke-width="2.8" stroke-linejoin="round"/>
<rect x="314.3" y="726.8" width="223.8" height="45.5" rx="2.5" fill="rgb(30,30,30)" fill-opacity="0.52"/>
<rect x="322" y="736" width="11.5" height="11.5" fill="#0f86ff"/>
<rect x="322" y="752.2" width="11.5" height="11.5" fill="#ffa02a"/>
<text x="338.4" y="747" font-size="12.5" fill="#f0f0f0" stroke="#f0f0f0" stroke-width="0.12" textLength="163.3" lengthAdjust="spacingAndGlyphs">Implied Overnight Rate (%)</text>
<text x="338.4" y="763.2" font-size="12.5" fill="#f0f0f0" stroke="#f0f0f0" stroke-width="0.12" textLength="192.1" lengthAdjust="spacingAndGlyphs">Number of Hikes/Cuts Priced In</text>
<rect x="295" y="501.6" width="1.2" height="297.9" fill="#0f86ff"/>
<path d="M296,501.6 L287.5,501.6 Q291.5,502.4 296,505.2 Z" fill="#0f86ff"/>
<path d="M295.5,542.1 Q291.5,544.7 287.5,545.3 Q291.5,545.9 295.5,548.5 Z" fill="#0f86ff"/>
<text x="286" y="550.5999999999999" font-size="12.5" fill="#f0f0f0" stroke="#f0f0f0" stroke-width="0.12" text-anchor="end" textLength="18" lengthAdjust="spacingAndGlyphs">4.0</text>
<path d="M295.5,584.5 Q291.5,587.1 287.5,587.7 Q291.5,588.3 295.5,590.9 Z" fill="#0f86ff"/>
<text x="286" y="593.04" font-size="12.5" fill="#f0f0f0" stroke="#f0f0f0" stroke-width="0.12" text-anchor="end" textLength="18" lengthAdjust="spacingAndGlyphs">3.8</text>
<path d="M295.5,627.0 Q291.5,629.6 287.5,630.2 Q291.5,630.8 295.5,633.4 Z" fill="#0f86ff"/>
<text x="286" y="635.4799999999999" font-size="12.5" fill="#f0f0f0" stroke="#f0f0f0" stroke-width="0.12" text-anchor="end" textLength="18" lengthAdjust="spacingAndGlyphs">3.6</text>
<path d="M295.5,669.4 Q291.5,672.0 287.5,672.6 Q291.5,673.2 295.5,675.8 Z" fill="#0f86ff"/>
<text x="286" y="677.92" font-size="12.5" fill="#f0f0f0" stroke="#f0f0f0" stroke-width="0.12" text-anchor="end" textLength="18" lengthAdjust="spacingAndGlyphs">3.4</text>
<path d="M295.5,711.9 Q291.5,714.5 287.5,715.1 Q291.5,715.7 295.5,718.3 Z" fill="#0f86ff"/>
<text x="286" y="720.3599999999999" font-size="12.5" fill="#f0f0f0" stroke="#f0f0f0" stroke-width="0.12" text-anchor="end" textLength="18" lengthAdjust="spacingAndGlyphs">3.2</text>
<path d="M295.5,754.3 Q291.5,756.9 287.5,757.5 Q291.5,758.1 295.5,760.7 Z" fill="#0f86ff"/>
<text x="286" y="762.8" font-size="12.5" fill="#f0f0f0" stroke="#f0f0f0" stroke-width="0.12" text-anchor="end" textLength="18" lengthAdjust="spacingAndGlyphs">3.0</text>
<rect x="292" y="523.6" width="3.5" height="1" fill="#0f86ff"/>
<rect x="292" y="566.0" width="3.5" height="1" fill="#0f86ff"/>
<rect x="292" y="608.5" width="3.5" height="1" fill="#0f86ff"/>
<rect x="292" y="650.9" width="3.5" height="1" fill="#0f86ff"/>
<rect x="292" y="693.3" width="3.5" height="1" fill="#0f86ff"/>
<rect x="292" y="735.8" width="3.5" height="1" fill="#0f86ff"/>
<rect x="292" y="778.2" width="3.5" height="1" fill="#0f86ff"/>
<rect x="292" y="798" width="3.5" height="1" fill="#0f86ff"/>
<rect x="693" y="501" width="1.2" height="299" fill="#ffa02a"/>
<path d="M693.5,522.4 Q697.5,525.0 701.5,525.6 Q697.5,526.2 693.5,528.8 Z" fill="#ffa02a"/>
<text x="703.8" y="530.9" font-size="12.5" fill="#f0f0f0" stroke="#f0f0f0" stroke-width="0.12" textLength="17.8" lengthAdjust="spacingAndGlyphs">0.0</text>
<path d="M693.5,575.5 Q697.5,578.1 701.5,578.7 Q697.5,579.3 693.5,581.9 Z" fill="#ffa02a"/>
<text x="703.8" y="584.04" font-size="12.5" fill="#f0f0f0" stroke="#f0f0f0" stroke-width="0.12" textLength="23.7" lengthAdjust="spacingAndGlyphs">-1.0</text>
<path d="M693.5,628.7 Q697.5,631.3 701.5,631.9 Q697.5,632.5 693.5,635.1 Z" fill="#ffa02a"/>
<text x="703.8" y="637.18" font-size="12.5" fill="#f0f0f0" stroke="#f0f0f0" stroke-width="0.12" textLength="23.7" lengthAdjust="spacingAndGlyphs">-2.0</text>
<path d="M693.5,681.8 Q697.5,684.4 701.5,685.0 Q697.5,685.6 693.5,688.2 Z" fill="#ffa02a"/>
<text x="703.8" y="690.3199999999999" font-size="12.5" fill="#f0f0f0" stroke="#f0f0f0" stroke-width="0.12" textLength="23.7" lengthAdjust="spacingAndGlyphs">-3.0</text>
<path d="M693.5,735.0 Q697.5,737.6 701.5,738.2 Q697.5,738.8 693.5,741.4 Z" fill="#ffa02a"/>
<text x="703.8" y="743.46" font-size="12.5" fill="#f0f0f0" stroke="#f0f0f0" stroke-width="0.12" textLength="23.7" lengthAdjust="spacingAndGlyphs">-4.0</text>
<path d="M693.5,788.1 Q697.5,790.7 701.5,791.3 Q697.5,791.9 693.5,794.5 Z" fill="#ffa02a"/>
<text x="703.8" y="796.5999999999999" font-size="12.5" fill="#f0f0f0" stroke="#f0f0f0" stroke-width="0.12" textLength="23.7" lengthAdjust="spacingAndGlyphs">-5.0</text>
<rect x="693.5" y="551.7" width="3.5" height="1" fill="#ffa02a"/>
<rect x="693.5" y="604.8" width="3.5" height="1" fill="#ffa02a"/>
<rect x="693.5" y="658.0" width="3.5" height="1" fill="#ffa02a"/>
<rect x="693.5" y="711.1" width="3.5" height="1" fill="#ffa02a"/>
<rect x="693.5" y="764.2" width="3.5" height="1" fill="#ffa02a"/>
<rect x="295" y="799" width="399" height="1.1" fill="#f4f4f4"/>
<rect x="312" y="800" width="3" height="3" fill="#f0f0f0"/>
<rect x="389" y="800" width="1" height="3" fill="#f0f0f0"/>
<rect x="485" y="800" width="1" height="3" fill="#f0f0f0"/>
<rect x="580" y="800" width="1" height="3" fill="#f0f0f0"/>
<rect x="676" y="800" width="1" height="3" fill="#f0f0f0"/>
<text x="389.1" y="813.8" font-size="13.3" fill="#f0f0f0" stroke="#f0f0f0" stroke-width="0.12" text-anchor="middle" textLength="70.6" lengthAdjust="spacingAndGlyphs">03/18/2026</text>
<text x="485.1" y="813.8" font-size="13.3" fill="#f0f0f0" stroke="#f0f0f0" stroke-width="0.12" text-anchor="middle" textLength="70.6" lengthAdjust="spacingAndGlyphs">10/28/2026</text>
<text x="580.1" y="813.8" font-size="13.3" fill="#f0f0f0" stroke="#f0f0f0" stroke-width="0.12" text-anchor="middle" textLength="70.6" lengthAdjust="spacingAndGlyphs">06/09/2027</text>
<text transform="translate(259.9,650.7) rotate(-90)" font-size="18" fill="#f0f0f0" text-anchor="middle" textLength="205.7" lengthAdjust="spacingAndGlyphs">Implied Overnight Rate (%)</text>
<text transform="translate(735.4,652.1) rotate(90)" font-size="18" fill="#f0f0f0" text-anchor="middle" textLength="241.8" lengthAdjust="spacingAndGlyphs">Number of Hikes/Cuts Priced In</text>
</svg></body></html>
